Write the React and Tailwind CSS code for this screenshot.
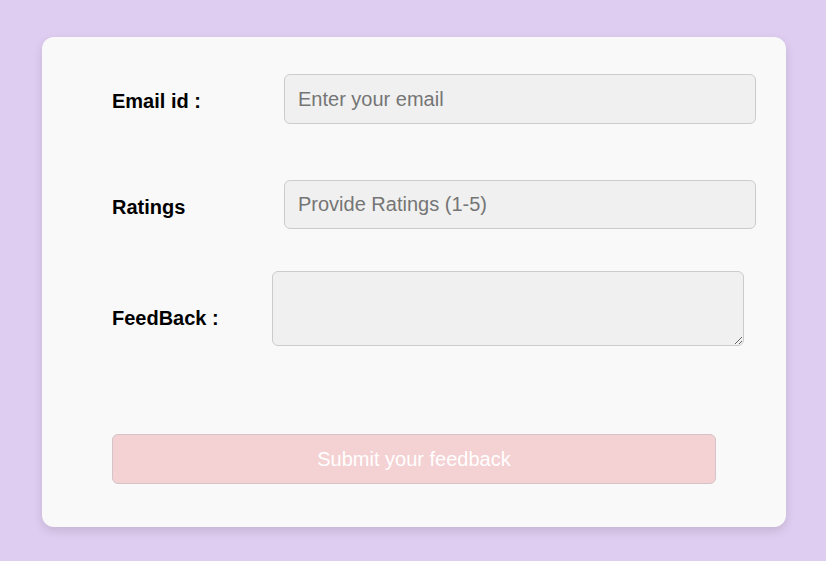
import React from 'react';

const App = () => {
  return (
    <div className="min-h-screen bg-[#dfcdf1] pt-[37px] pl-[42px]" style={{ fontFamily: '"Liberation Sans", Arial, sans-serif' }}>
      <div className="w-[744px] h-[490px] bg-[#f9f9f9] rounded-[12px] shadow-[0_4px_10px_rgba(0,0,0,0.12)] pt-[37px] pl-[70px]">
        <div className="flex items-center h-[50px]">
          <label className="w-[172px] text-[20px] leading-[24px] font-bold text-black pt-[4px]">Email id :</label>
          <input
            type="email"
            placeholder="Enter your email"
            className="w-[472px] h-[50px] rounded-[6px] border border-[#cccccc] bg-[#f0f0f0] px-[13px] text-[20px] text-[#333] placeholder:text-[#757575] outline-none"
          />
        </div>
        <div className="flex items-center h-[50px] mt-[55px]">
          <label className="w-[172px] text-[20px] leading-[24px] font-bold text-black pt-[6px]">Ratings</label>
          <input
            type="text"
            placeholder="Provide Ratings (1-5)"
            className="w-[472px] h-[49px] rounded-[6px] border border-[#cccccc] bg-[#f0f0f0] px-[13px] text-[20px] text-[#333] placeholder:text-[#757575] outline-none"
          />
        </div>
        <div className="flex items-center h-[75px] mt-[42px]">
          <label className="w-[160px] text-[20px] leading-[24px] font-bold text-black pt-[18px]">FeedBack :</label>
          <textarea className="w-[472px] h-[75px] rounded-[6px] border border-[#cccccc] bg-[#f0f0f0] outline-none block" />
        </div>
        <button className="mt-[88px] w-[604px] h-[50px] rounded-[6px] border border-[#d4c4c6] bg-[#f4d1d3] text-white text-[20px]">
          Submit your feedback
        </button>
      </div>
    </div>
  );
};

export default App;
